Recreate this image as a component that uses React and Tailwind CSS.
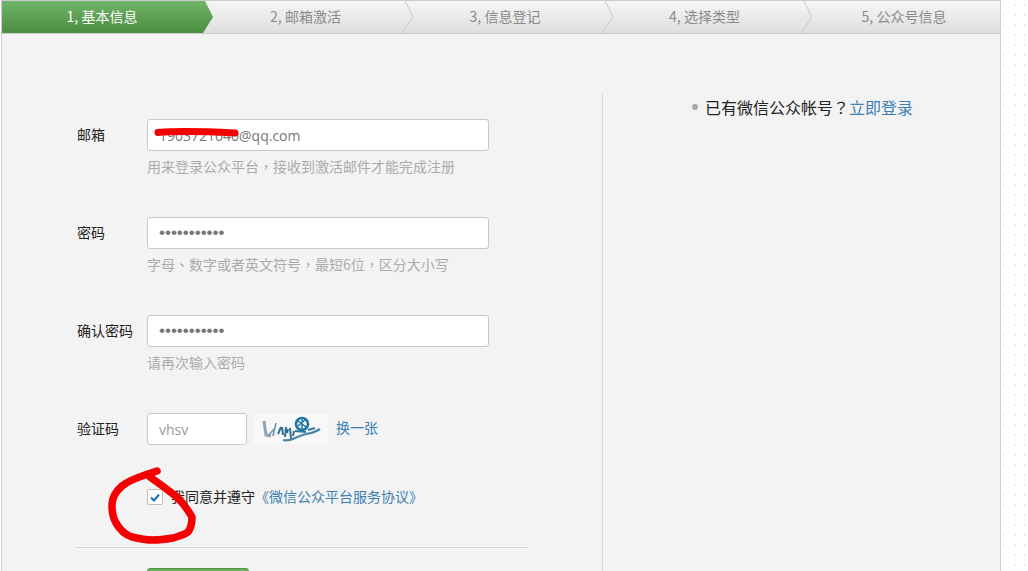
function Chevron() {
  return (
    <svg className="absolute right-[-8px] top-0 z-10" width="12" height="32" viewBox="0 0 12 32" fill="none">
      <polyline points="4,0 12,16 1,32" stroke="#c6c6c6" strokeWidth="1" />
    </svg>
  );
}

function Step({ className, children, chevron = true }) {
  return (
    <div className={"relative flex h-full shrink-0 items-center justify-center bg-gradient-to-b from-[#f6f6f6] to-[#dedede] pb-[2px] text-[#8a8a8a] " + className}>
      <span>{children}</span>
      {chevron && <Chevron />}
    </div>
  );
}

function Field({ label, hint, children }) {
  return (
    <div className="flex h-[98px] items-start">
      <div className="flex h-8 w-[71px] shrink-0 items-center pb-[2px] pl-px text-[#222]">{label}</div>
      <div>
        {children}
        {hint && <div className="mt-[5px] h-5 leading-5 text-[#ababab]">{hint}</div>}
      </div>
    </div>
  );
}

const Mid = ({ children }) => <span className="font-['Noto_Sans_CJK_TC',sans-serif]">{children}</span>;

const inputCls =
  "block h-8 rounded-[3px] border border-[#c8c8c8] bg-white px-[11px] text-[#777] outline-none";
const textCls = " font-['Open_Sans',sans-serif] text-[14px]";
const dotCls = " font-['Liberation_Sans',sans-serif] text-[17px] leading-none tracking-[0px]";

export default function App() {
  return (
    <div className="h-[571px] w-[1028px] overflow-hidden bg-white bg-[radial-gradient(circle,#efefef_0.7px,transparent_0.9px)] bg-[size:10px_10px] font-['Noto_Sans_CJK_SC','Noto_Sans',sans-serif] text-sm">
      <div className="relative ml-px h-[571px] w-[1000px] border-x border-[#cfcfcf] bg-[#f3f3f3]">
        {/* step bar */}
        <div className="flex h-[34px] border-y border-[#cdcdcd]">
          <div className="relative flex h-full w-[200px] shrink-0 items-center justify-center pb-[2px] text-white">
            <div className="absolute inset-y-0 left-0 z-10 w-[212px] bg-gradient-to-b from-[#71b668] to-[#4a8c40] [clip-path:polygon(0_0,203px_0,211px_50%,201px_100%,0_100%)]" />
            <div className="absolute inset-y-0 left-[190px] w-[12px] bg-[#e8e8e8]" />
            <span className="relative z-20">1, 基本信息</span>
          </div>
          <Step className="ml-[2px] w-[201px] pl-[2px]">2, 邮箱激活</Step>
          <Step className="w-[200px]">3, 信息登记</Step>
          <Step className="w-[199px]">4, 选择类型</Step>
          <Step className="flex-1 pl-1" chevron={false}>5, 公众号信息</Step>
        </div>

        {/* body */}
        <div className="flex">
          <div className="w-[600px] shrink-0 pl-[74px] pt-[85px]">
            <Field label="邮箱" hint={<>用来登录公众平台<Mid>，</Mid>接收到激活邮件才能完成注册</>}>
              <input readOnly defaultValue="1903721640@qq.com" className={inputCls + textCls + " w-[342px]"} />
            </Field>
            <Field label="密码" hint={<>字母<Mid>、</Mid>数字或者英文符号<Mid>，</Mid>最短6位<Mid>，</Mid>区分大小写</>}>
              <input readOnly defaultValue="•••••••••••" className={inputCls + dotCls + " w-[342px]"} />
            </Field>
            <Field label="确认密码" hint="请再次输入密码">
              <input readOnly defaultValue="•••••••••••" className={inputCls + dotCls + " w-[342px]"} />
            </Field>
            <div className="flex h-[76px] items-start">
              <div className="flex h-8 w-[71px] shrink-0 items-center pb-[2px] pl-px text-[#222]">验证码</div>
              <input readOnly defaultValue="vhsv" className={inputCls + textCls + " w-[100px] text-[#999]"} />
              <div className="ml-[6px] mt-px h-[30px] w-[75px] bg-[#f8f8f8]">
                <svg width="75" height="30" viewBox="0 0 75 30" fill="none">
                  <path d="M11 7 L13 21 L18 22" stroke="#8ba3b8" strokeWidth="3" />
                  <path d="M15 22 L21 15 M23 9 L20 22" stroke="#7f9cb3" strokeWidth="1.8" />
                  <path d="M25 20 L28 13 M29 13 L30 21 M33 13 L32 23 M35 15 L34 19 M37 14 L38 25 M41 17 L40 22" stroke="#2f6f96" strokeWidth="2" />
                  <path d="M30 26 C37 28 41 24 47 22 C54 19 60 20 67 15" stroke="#4f84a6" strokeWidth="2.2" />
                  <circle cx="49" cy="10" r="6" stroke="#1f78a3" strokeWidth="2.6" />
                  <path d="M45 7 L53 13 M45 12 L52 6 M49 4 V16" stroke="#1f78a3" strokeWidth="1.5" />
                  <path d="M42 17 L53 18 M55 16 L62 14" stroke="#2f7aa0" strokeWidth="2" />
                </svg>
              </div>
              <a className="ml-2 flex h-[30px] items-center pb-[2px] text-[#3b7fb4]">换一张</a>
            </div>
            <div className="ml-[71px] flex h-4 items-center">
              <span className="flex h-4 w-4 shrink-0 items-center justify-center rounded-[2px] border border-[#bdbdbd] bg-white">
                <svg width="10" height="9" viewBox="0 0 10 9" fill="none">
                  <path d="M1 4.5 L4 7.5 L9 1.5" stroke="#1f6fa8" strokeWidth="2" />
                </svg>
              </span>
              <span className="ml-2 pb-[2px] text-[#222]">我同意并遵守</span>
              <a className="pb-[2px] text-[#3b7fb4]">《微信公众平台服务协议》</a>
            </div>
            <div className="mt-[42px] w-[452px] border-t border-[#d3d3d3]" />
            <div className="ml-[71px] mt-5 h-9 w-[102px] rounded-[3px] border border-[#4d9440] bg-gradient-to-b from-[#6cb25f] to-[#4a9040]" />
          </div>

          <div className="mt-[60px] h-[477px] flex-1 border-l border-[#d5d5d5] pl-[89px] pt-[1px]">
            <div className="flex items-center text-base leading-6 text-[#222]">
              <span className="mr-[7px] h-[6px] w-[6px] rounded-full bg-[#a8a8a8]" />
              <span>已有微信公众帐号<Mid>？</Mid></span>
              <a className="text-[#3b7fb4]">立即登录</a>
            </div>
          </div>
        </div>

        {/* red annotation strokes over the page */}
        <svg className="absolute left-[-2px] top-0 z-30" width="1028" height="571" fill="none">
          <path d="M158 132.5 C175 131 215 132 235 133" stroke="#f40000" strokeWidth="7" strokeLinecap="round" />
          <path
            d="M157 471 L145 475 C136 478 128 481 122 486 C115 492 112 498 112 505 C112 512 113 518 116 523 C120 530 126 535 132 537 C140 539 146 540 153 540 C160 540 167 539 173 538 C179 536 184 535 188 532 C191 528 192 522 192 517 C188 510 183 503 177 497 C168 490 160 484 150 477"
            stroke="#f40000"
            strokeWidth="7.5"
            strokeLinecap="round"
            strokeLinejoin="round"
          />
        </svg>
      </div>
    </div>
  );
}
